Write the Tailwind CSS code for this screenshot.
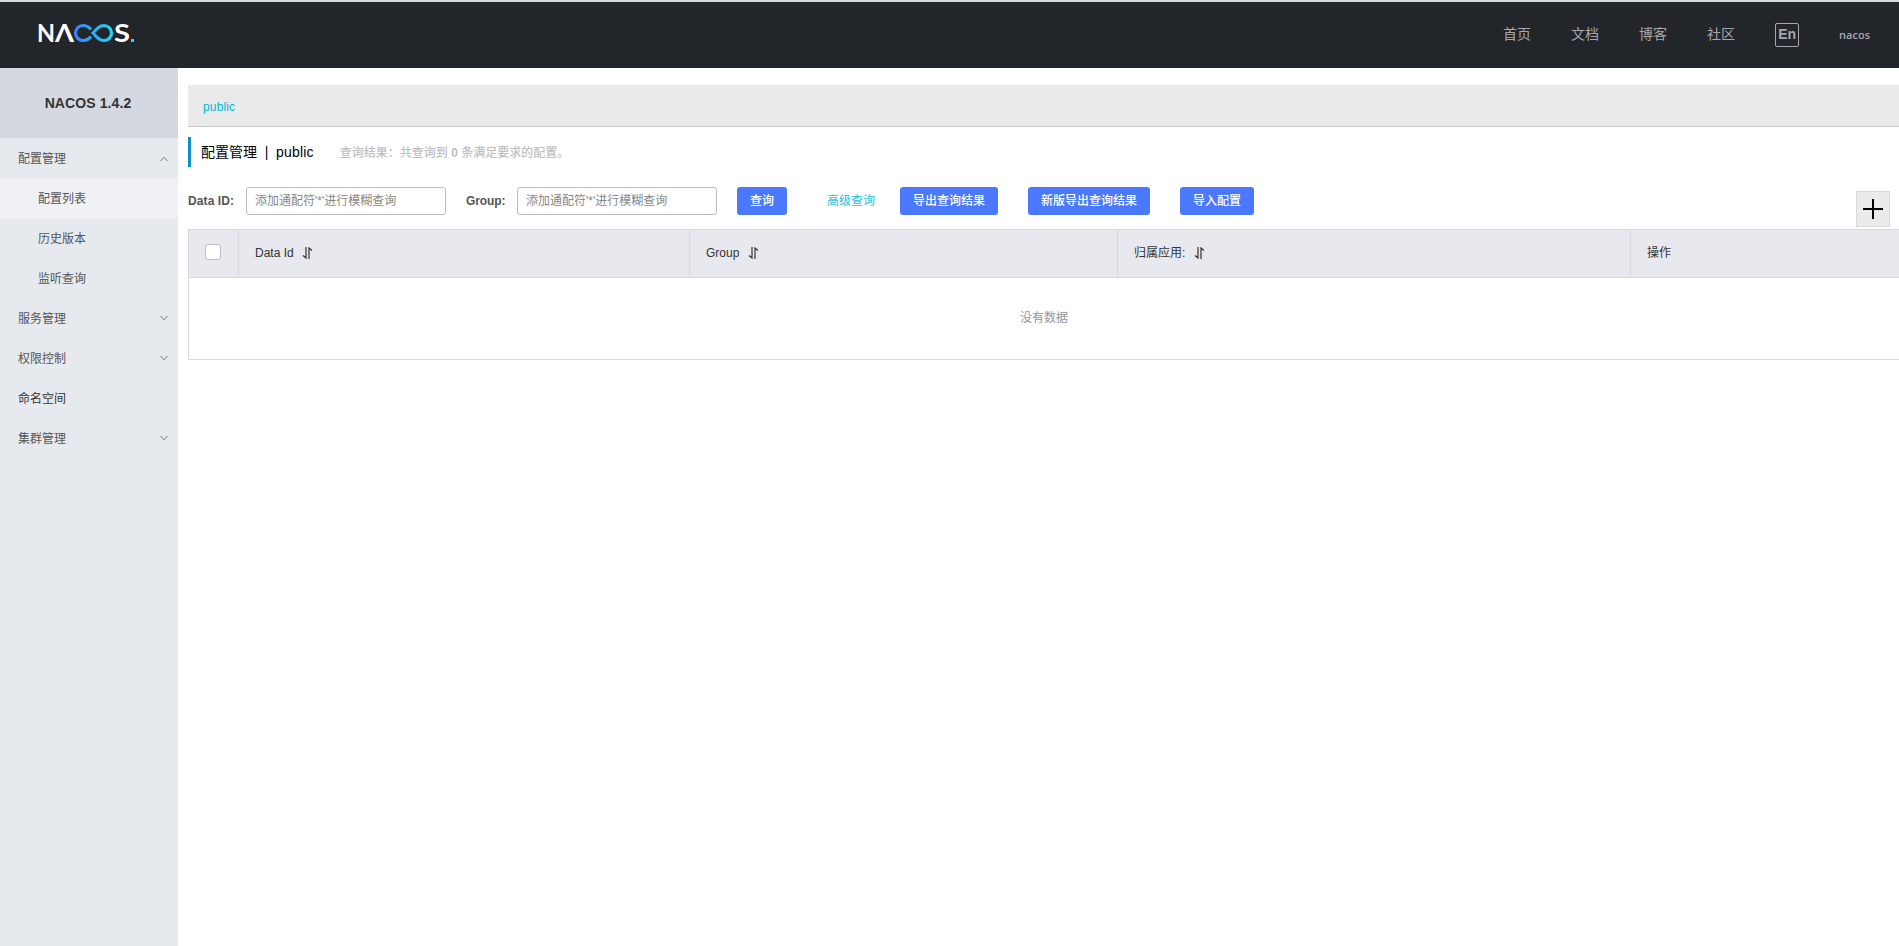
<!DOCTYPE html>
<html lang="zh-CN">

<head>
  <meta charset="UTF-8">
  <meta name="viewport" content="width=device-width, initial-scale=1.0">
  <title>Nacos</title>
  <script src="https://cdn.jsdelivr.net/npm/@tailwindcss/browser@4"></script>
</head>

<body class="flex h-screen flex-col overflow-hidden bg-white font-['Liberation_Sans','Noto_Sans_CJK_SC',sans-serif] text-xs text-[#333]">

  <!-- === Top bar === -->
  <header class="flex h-17 shrink-0 items-center justify-between border-t-2 border-[#d5dadd] bg-[#22252a] pl-[37px] pr-[29px]">
    <a href="#" aria-label="Nacos" class="-mt-0.5">
      <svg class="block h-9 w-25" viewBox="0 0 100 36" font-family="Lato, sans-serif" font-weight="700" font-size="25" fill="#fff">
        <defs>
          <linearGradient id="loop" gradientUnits="userSpaceOnUse" x1="37" y1="0" x2="77" y2="0">
            <stop offset="0" stop-color="#3b7dff" />
            <stop offset="1" stop-color="#16e0ee" />
          </linearGradient>
        </defs>
        <text x="0" y="26" textLength="18" lengthAdjust="spacingAndGlyphs">N</text>
        <text x="18" y="26" textLength="19" lengthAdjust="spacingAndGlyphs">Λ</text>
        <path d="M54 13.500C51.500 10.500 49 9.500 46 9.500A7.500 7.500 0 0 0 46 24.500C49 24.500 51.500 23.500 54 20.500M56 17C60 12.500 62.500 9.500 67 9.500A7.500 7.500 0 0 1 67 24.500C62.500 24.500 60 21.500 56 17Z" fill="none" stroke="url(#loop)" stroke-width="3.200" />
        <text x="77" y="26" textLength="16" lengthAdjust="spacingAndGlyphs">S</text>
        <rect x="94" y="23" width="3" height="3" fill="#16e0ee" />
      </svg>
    </a>

    <nav class="flex items-center gap-10 text-sm text-[#a7a8aa]">
      <a href="#" class="-mt-0.5">首页</a>
      <a href="#" class="-mt-0.5">文档</a>
      <a href="#" class="-mt-0.5">博客</a>
      <a href="#" class="-mt-0.5">社区</a>
      <button class="flex h-6 w-6 items-center justify-center rounded-xs border border-[#a7a8aa] pb-0.5 font-bold leading-none">En</button>
      <a href="#" class="font-['Open_Sans'] text-[11px] font-semibold">nacos</a>
    </nav>
  </header>

  <div class="flex min-h-0 grow">

    <!-- === Side menu === -->
    <aside class="w-[178px] shrink-0 bg-[#e6e9ee] text-[#555]">
      <h1 class="flex h-[70px] items-center justify-center bg-[#d4d8e0] pr-0.5 text-sm font-bold tracking-[0.1px] text-[#333]">NACOS 1.4.2</h1>
      <ul>
        <li class="flex h-10 items-center justify-between pl-[18px] pr-2.5 pt-0.5">配置管理
          <svg class="h-2 w-2" viewBox="0 0 8 8" fill="none" stroke="#777" stroke-width="1"><path d="M0.500 6L4 2.200L7.500 6" /></svg>
        </li>
        <li class="flex h-10 items-center bg-[#eff1f6] pl-[38px] pt-0.5">配置列表</li>
        <li class="flex h-10 items-center pl-[38px] pt-0.5">历史版本</li>
        <li class="flex h-10 items-center pl-[38px] pt-0.5">监听查询</li>
        <li class="flex h-10 items-center justify-between pl-[18px] pr-2.5 pt-0.5">服务管理
          <svg class="h-2 w-2" viewBox="0 0 8 8" fill="none" stroke="#777" stroke-width="1"><path d="M0.500 1L4 4.800L7.500 1" /></svg>
        </li>
        <li class="flex h-10 items-center justify-between pl-[18px] pr-2.5 pt-0.5">权限控制
          <svg class="h-2 w-2" viewBox="0 0 8 8" fill="none" stroke="#777" stroke-width="1"><path d="M0.500 1L4 4.800L7.500 1" /></svg>
        </li>
        <li class="flex h-10 items-center pl-[18px] pt-0.5 text-[#333]">命名空间</li>
        <li class="flex h-10 items-center justify-between pl-[18px] pr-2.5 pt-0.5">集群管理
          <svg class="h-2 w-2" viewBox="0 0 8 8" fill="none" stroke="#777" stroke-width="1"><path d="M0.500 1L4 4.800L7.500 1" /></svg>
        </li>
      </ul>
    </aside>

    <main class="min-w-0 grow pl-2.5 pt-[17px]">
      <!-- Namespaces -->
      <div class="flex h-[42px] items-center border-b border-[#c7c7c7] bg-[#eaeaea] pl-[15px] pt-0.5 tracking-[0.15px] text-[#00b7d8]">public</div>

      <!-- Title -->
      <div class="mt-2.5 flex h-[30px] items-center border-l-3 border-[#0992c9] pl-2.5">
        <h2 class="flex text-sm text-black"><span>配置管理</span><span class="w-[19px] text-center">|</span><span class="tracking-[0.2px]">public</span></h2>
        <p class="ml-[26px] pt-0.5 font-medium text-[#bfbfbf]">查询结果：共查询到 <b>0</b> 条满足要求的配置。</p>
      </div>

      <!-- Search form -->
      <div class="mt-5 flex h-7 pr-[9px]">
        <label for="data-id" class="w-[58px] shrink-0 pt-1.5 font-bold leading-4 tracking-[0.1px] text-[#555]">Data ID:</label>
        <input id="data-id" type="text" placeholder="添加通配符'*'进行模糊查询" class="h-7 w-50 rounded-[3px] border border-[#babcca] px-2 placeholder:text-[#888]">
        <label for="group" class="ml-5 w-[51px] shrink-0 pt-1.5 font-bold leading-4 tracking-[-0.1px] text-[#555]">Group:</label>
        <input id="group" type="text" placeholder="添加通配符'*'进行模糊查询" class="h-7 w-50 rounded-[3px] border border-[#babcca] px-2 placeholder:text-[#888]">
        <button class="ml-5 h-7 w-[50px] rounded-[3px] bg-[#4a79ff] font-medium text-white">查询</button>
        <button class="ml-10 h-7 w-12 text-[#26c2dd]">高级查询</button>
        <button class="ml-[25px] h-7 w-[98px] rounded-[3px] bg-[#4a79ff] font-medium text-white">导出查询结果</button>
        <button class="ml-[30px] h-7 w-[122px] rounded-[3px] bg-[#4a79ff] font-medium text-white">新版导出查询结果</button>
        <button class="ml-[30px] h-7 w-[74px] rounded-[3px] bg-[#4a79ff] font-medium text-white">导入配置</button>
        <button aria-label="新建配置" class="ml-auto mt-1 flex h-9 w-[34px] items-center justify-center border border-[#d8d8d8] bg-[#ebebeb]">
          <svg class="h-5 w-5" viewBox="0 0 20 20" fill="none" stroke="#000" stroke-width="2"><path d="M0 10H20M10 0V20" /></svg>
        </button>
      </div>

      <!-- Config list -->
      <table class="mt-3.5 w-full table-fixed border-separate border-spacing-0 border-l border-t border-[#d8d9e0] text-left">
        <thead class="bg-[#e8e9ee]">
          <tr class="h-12">
            <th class="w-[50px] border-b border-r border-[#d8d9e0] pl-4 pr-0 pb-1"><input type="checkbox" class="block h-4 w-4 appearance-none rounded-[3px] border border-[#babcca] bg-white"></th>
            <th class="w-[451px] border-b border-r border-[#d8d9e0] px-4 pb-0.5 font-normal">
              <div class="flex items-center gap-2">Data Id
                <svg class="h-3 w-[11px]" viewBox="0 0 11 12" fill="none" stroke="#333" stroke-width="1.200"><path d="M4 0V11L1 8.500M7 12V1L10 3.500" /></svg>
              </div>
            </th>
            <th class="w-[428px] border-b border-r border-[#d8d9e0] px-4 pb-0.5 font-normal">
              <div class="flex items-center gap-[9px]">Group
                <svg class="h-3 w-[11px]" viewBox="0 0 11 12" fill="none" stroke="#333" stroke-width="1.200"><path d="M4 0V11L1 8.500M7 12V1L10 3.500" /></svg>
              </div>
            </th>
            <th class="w-[513px] border-b border-r border-[#d8d9e0] px-4 pb-0.5 font-normal">
              <div class="flex items-center gap-[9px]">归属应用:
                <svg class="h-3 w-[11px]" viewBox="0 0 11 12" fill="none" stroke="#333" stroke-width="1.200"><path d="M4 0V11L1 8.500M7 12V1L10 3.500" /></svg>
              </div>
            </th>
            <th class="border-b border-[#d8d9e0] px-4 pb-0.5 font-normal">操作</th>
          </tr>
        </thead>
        <tbody>
          <tr class="h-[82px]">
            <td colspan="5" class="border-b border-[#d8d9e0] pb-0.5 text-center text-[#9294a0]">没有数据</td>
          </tr>
        </tbody>
      </table>
    </main>
  </div>

</body>

</html>
